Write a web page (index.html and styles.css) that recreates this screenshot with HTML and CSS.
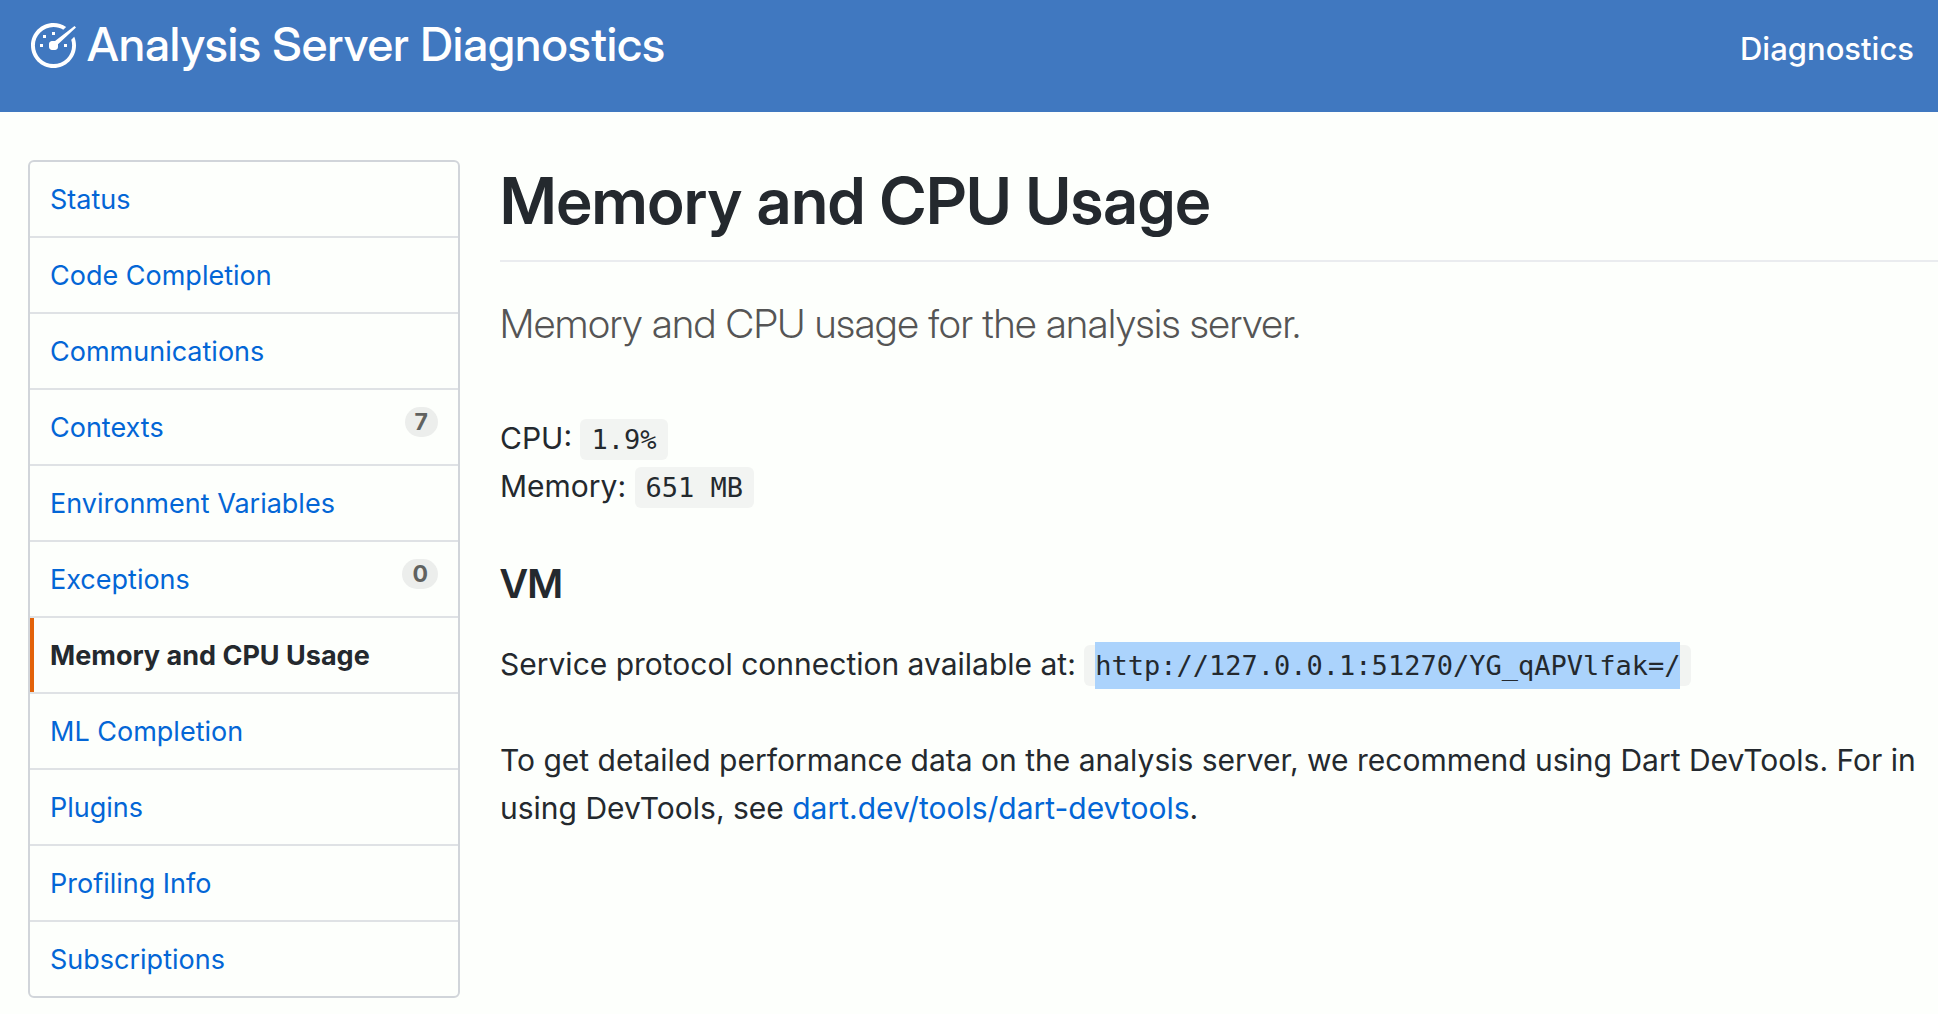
FILE: index.html
```html
<!DOCTYPE html>
<html lang="en">
<head>
<meta charset="utf-8">
<meta name="viewport" content="width=device-width, initial-scale=1">
<title>Analysis Server Diagnostics</title>
<link rel="stylesheet" href="styles.css">
</head>
<body>
<header class="masthead">
  <a class="brand" href="#">
    <svg class="brand-icon" viewBox="0 0 16 16" aria-hidden="true"><path fill="currentColor" d="M9 5H8V4h1v1zm4 3h-1v1h1V8zM6 5H5v1h1V5zM5 8H4v1h1V8zm11-5.500l-.5-.5L9 7c-.06-.02-1 0-1 0-.55 0-1 .45-1 1v1c0 .55.45 1 1 1h1c.55 0 1-.45 1-1v-.92l6-5.580zm-1.590 4.090c.19.61.3 1.250.3 1.910 0 3.420-2.780 6.200-6.200 6.200-3.420 0-6.210-2.780-6.210-6.200 0-3.420 2.780-6.200 6.200-6.200 1.200 0 2.310.34 3.270.94l.94-.94A7.459 7.459 0 0 0 8.510 1C4.360 1 1 4.360 1 8.500 1 12.640 4.360 16 8.500 16c4.140 0 7.500-3.360 7.500-7.500 0-1.030-.2-2.020-.59-2.910l-1 1z"/></svg>
    <span class="brand-name">Analysis Server Diagnostics</span>
  </a>
  <nav class="site-nav" aria-label="Site"><a href="#">Diagnostics</a></nav>
</header>
<div class="layout">
  <nav class="menu" aria-label="Pages">
    <a class="menu-item" href="#">Status</a>
    <a class="menu-item" href="#">Code Completion</a>
    <a class="menu-item" href="#">Communications</a>
    <a class="menu-item" href="#">Contexts <span class="counter">7</span></a>
    <a class="menu-item" href="#">Environment Variables</a>
    <a class="menu-item" href="#">Exceptions <span class="counter">0</span></a>
    <a class="menu-item selected" href="#" aria-current="page">Memory and CPU Usage</a>
    <a class="menu-item" href="#">ML Completion</a>
    <a class="menu-item" href="#">Plugins</a>
    <a class="menu-item" href="#">Profiling Info</a>
    <a class="menu-item" href="#">Subscriptions</a>
  </nav>
  <main class="content">
    <h1>Memory and CPU Usage</h1>
    <p class="lead">Memory and CPU usage for the analysis server.</p>
    <p>CPU: <code>1.9%</code><br>Memory: <code>651 MB</code></p>
    <h3>VM</h3>
    <p>Service protocol connection available at: <code><mark>http://127.0.0.1:51270/YG_qAPVlfak=/</mark></code></p>
    <p class="note">To get detailed performance data on the analysis server, we recommend using Dart DevTools. For in<br>using DevTools, see <a href="#">dart.dev/tools/dart-devtools</a>.</p>
  </main>
</div>
</body>
</html>
```
FILE: styles.css
```css
* {
  box-sizing: border-box;
}

body {
  margin: 0;
  background: #fdfffc;
  color: #24292e;
  font: 30px/48px Inter, "Liberation Sans", sans-serif;
}

a {
  color: #0366d6;
  text-decoration: none;
}

.masthead {
  display: flex;
  justify-content: space-between;
  align-items: flex-start;
  padding: 20px 24px 39px 28px;
  background: #4078c0;
}

.masthead a {
  color: #fff;
}

.brand {
  display: flex;
  align-items: center;
  gap: 11px;
}

.brand-icon {
  width: 48px;
  height: 48px;
}

.brand-name,
h1,
h3,
.lead {
  font-family: "Inter Display", Inter, "Liberation Sans", sans-serif;
}

.brand-name {
  font-size: 47px;
  font-weight: 500;
}

.site-nav {
  padding-top: 5px;
  font-size: 31px;
  font-weight: 500;
}

.layout {
  display: flex;
  align-items: flex-start;
  gap: 40px;
  padding: 48px 0 16px 28px;
}

.menu {
  flex: 0 0 432px;
  border: 2px solid #d1d5da;
  border-radius: 6px;
  overflow: hidden;
  font-size: 27px;
  line-height: 42px;
}

.menu-item {
  display: flex;
  justify-content: space-between;
  align-items: flex-start;
  padding: 17px 20px 15px;
  border-bottom: 2px solid #dfe2e5;
}

.menu-item:last-child {
  border-bottom: 0;
}

.menu-item.selected {
  color: #24292e;
  font-weight: 700;
  box-shadow: inset 4px 0 #e36209;
}

.counter {
  padding: 0 10px;
  border-radius: 15px;
  background: #eceeec;
  color: #606260;
  font-size: 23px;
  font-weight: 700;
  line-height: 30px;
}

.content {
  flex: 1;
  min-width: 0;
}

h1,
h3,
p {
  margin: 0;
}

h1 {
  margin-bottom: 32px;
  padding-bottom: 18px;
  border-bottom: 2px solid #eaecef;
  font-size: 64px;
  font-weight: 600;
  line-height: 82px;
}

h3 {
  margin: 44px 0 26px;
  font-size: 40px;
  font-weight: 600;
  line-height: 60px;
}

.lead {
  margin-bottom: 60px;
  color: #555;
  font-size: 40px;
  font-weight: 300;
  line-height: 60px;
}

.note {
  margin-top: 48px;
}

code {
  padding: 5px 11px;
  border-radius: 6px;
  background: #f2f4f2;
  font: 27px "DejaVu Sans Mono", monospace;
}

mark {
  padding: 8px 0;
  background: #abd3fc;
  color: inherit;
}
```
